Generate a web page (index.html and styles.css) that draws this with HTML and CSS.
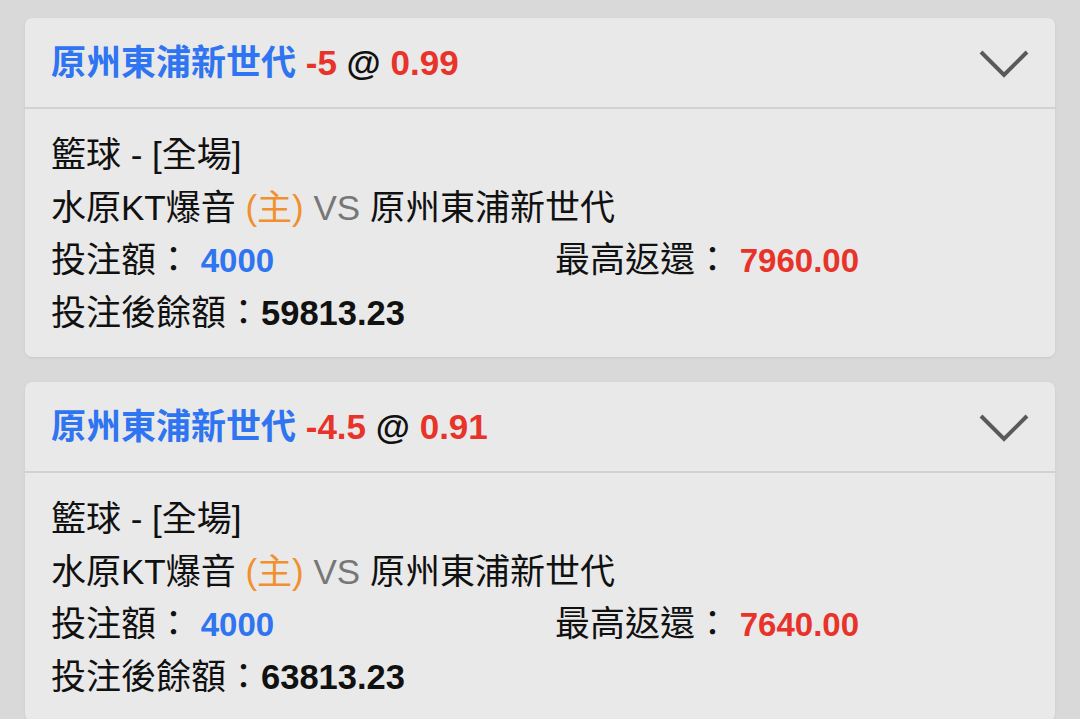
FILE: index.html
```html
<!DOCTYPE html>
<html lang="zh-Hant">
<head>
<meta charset="utf-8">
<link rel="stylesheet" href="styles.css">
</head>
<body>
<div class="list">
  <div class="card">
    <div class="card-head">
      <div class="title"><span class="team">原州東浦新世代</span> <span class="red">-5</span> <span class="at">@</span> <span class="red">0.99</span></div>
      <svg class="chev" width="50" height="30" viewBox="0 0 50 30"><polyline points="2,3 25,26 48,3" fill="none" stroke="#5a5a5a" stroke-width="4"/></svg>
    </div>
    <div class="card-body">
      <div class="line">籃球 - [全場]</div>
      <div class="line">水原KT爆音 <span class="home">(主)</span> <span class="vs">VS</span> 原州東浦新世代</div>
      <div class="row">
        <div class="line col">投注額： <span class="blue amt">4000</span></div>
        <div class="line">最高返還： <span class="red amt">7960.00</span></div>
      </div>
      <div class="line">投注後餘額：<span class="bold">59813.23</span></div>
    </div>
  </div>
  <div class="card">
    <div class="card-head">
      <div class="title"><span class="team">原州東浦新世代</span> <span class="red">-4.5</span> <span class="at">@</span> <span class="red">0.91</span></div>
      <svg class="chev" width="50" height="30" viewBox="0 0 50 30"><polyline points="2,3 25,26 48,3" fill="none" stroke="#5a5a5a" stroke-width="4"/></svg>
    </div>
    <div class="card-body">
      <div class="line">籃球 - [全場]</div>
      <div class="line">水原KT爆音 <span class="home">(主)</span> <span class="vs">VS</span> 原州東浦新世代</div>
      <div class="row">
        <div class="line col">投注額： <span class="blue amt">4000</span></div>
        <div class="line">最高返還： <span class="red amt">7640.00</span></div>
      </div>
      <div class="line">投注後餘額：<span class="bold">63813.23</span></div>
    </div>
  </div>
</div>
</body>
</html>
```

FILE: styles.css
```css
html, body {
  margin: 0;
  padding: 0;
  background: #d9d9d9;
  overflow: hidden;
  height: 719px;
}
body {
  font-family: "Liberation Sans", "Noto Sans CJK TC", sans-serif;
  color: #111;
  font-size: 35px;
}
.list {
  display: flex;
  flex-direction: column;
  gap: 25px;
  padding: 18px 25px 0 25px;
}
.card {
  background: #e9e9e9;
  border-radius: 7px;
  box-shadow: 0 1px 3px rgba(0,0,0,0.08);
}
.card-head {
  height: 89px;
  display: flex;
  align-items: center;
  justify-content: space-between;
  padding: 0 26px 0 26px;
  border-bottom: 2px solid #d2d2d2;
}
.title {
  font-size: 35px;
  font-weight: bold;
  line-height: 1;
  white-space: nowrap;
}
.team { color: #2f74f0; }
.red { color: #e8332a; font-weight: bold; }
.at { color: #111; font-weight: bold; }
.chev { display: block; margin-top: 2px; }
.card-body {
  padding: 20px 27px 18px 26px;
}
.line {
  line-height: 52.5px;
  height: 52.5px;
  white-space: nowrap;
}
.row {
  display: flex;
}
.col {
  width: 504px;
}
.amt { font-size: 33px; }
.blue { color: #2f74f0; font-weight: bold; }
.bold { font-weight: bold; color: #111; font-size: 34.5px; }
.home { color: #f0902e; }
.vs { color: #777; }
```
